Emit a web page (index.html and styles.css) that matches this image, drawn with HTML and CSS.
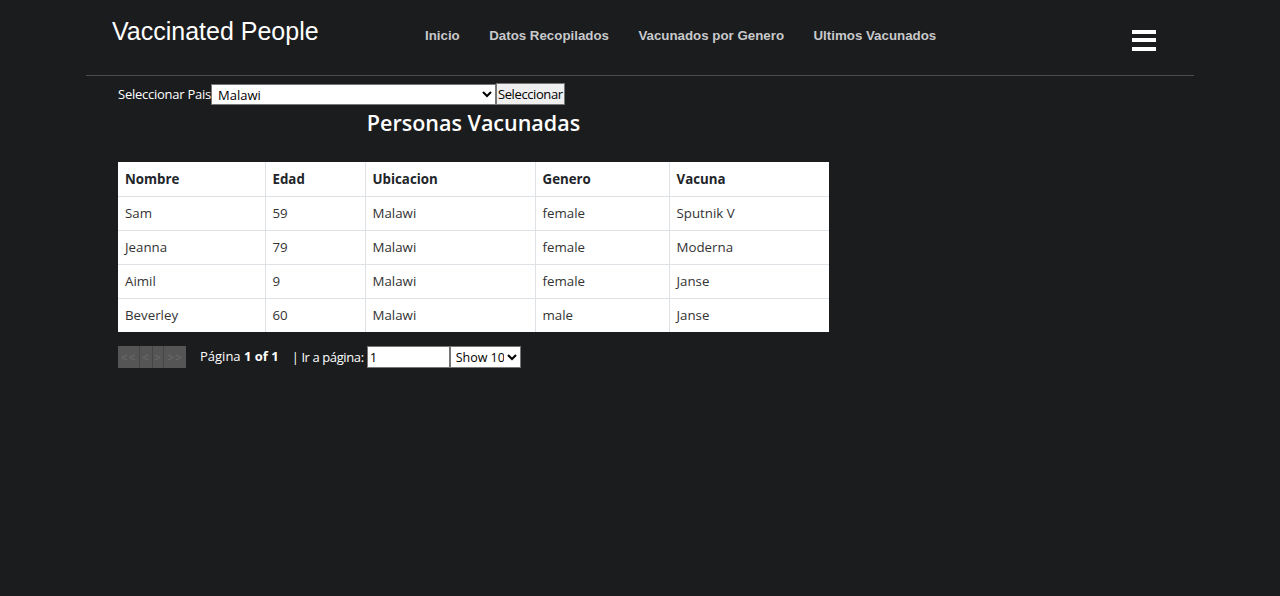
FILE: index.html
```html
<!DOCTYPE html>
<html lang="es">
<head>
<meta charset="utf-8">
<title>Vaccinated People</title>
<link rel="stylesheet" href="styles.css">
</head>
<body>
<header class="topbar">
  <div class="brand">Vaccinated People</div>
  <nav class="nav">
    <a href="#">Inicio</a>
    <a href="#">Datos Recopilados</a>
    <a href="#">Vacunados por Genero</a>
    <a href="#">Ultimos Vacunados</a>
  </nav>
  <button class="burger" aria-label="menu"><span></span><span></span><span></span></button>
</header>
<main class="main">
  <form class="picker">
    <label for="pais">Seleccionar Pais</label>
    <select id="pais" class="country"><option>Malawi</option></select>
    <button type="button" class="go">Seleccionar</button>
  </form>
  <section class="block">
    <h2 class="title">Personas Vacunadas</h2>
    <table class="grid">
      <thead>
        <tr><th class="c1">Nombre</th><th class="c2">Edad</th><th class="c3">Ubicacion</th><th class="c4">Genero</th><th class="c5">Vacuna</th></tr>
      </thead>
      <tbody>
        <tr><td>Sam</td><td>59</td><td>Malawi</td><td>female</td><td>Sputnik V</td></tr>
        <tr><td>Jeanna</td><td>79</td><td>Malawi</td><td>female</td><td>Moderna</td></tr>
        <tr><td>Aimil</td><td>9</td><td>Malawi</td><td>female</td><td>Janse</td></tr>
        <tr><td>Beverley</td><td>60</td><td>Malawi</td><td>male</td><td>Janse</td></tr>
      </tbody>
    </table>
    <div class="pager">
      <div class="pbtns">
        <button type="button" class="b-first" disabled>&lt;&lt;</button><button type="button" class="b-prev" disabled>&lt;</button><button type="button" class="b-next" disabled>&gt;</button><button type="button" class="b-last" disabled>&gt;&gt;</button>
      </div>
      <span class="pinfo">Página <strong>1 of 1</strong></span>
      <span class="goto">| Ir a página:</span>
      <input class="pnum" type="number" value="1">
      <select class="psize"><option>Show 10</option></select>
    </div>
  </section>
</main>
</body>
</html>
```
FILE: styles.css
```css
html, body {
  margin: 0;
  padding: 0;
  background: #1b1c1e;
  color: #fff;
  font-family: "Open Sans", "Noto Sans", sans-serif;
}
.topbar {
  margin: 0 86px;
  border-bottom: 1px solid #4a4c50;
  display: flex;
  align-items: flex-start;
  box-sizing: border-box;
  height: 76px;
}
.brand {
  font-family: "Liberation Sans", Arial, sans-serif;
  font-size: 25px;
  color: #fff;
  margin: 17px 0 0 26px;
  line-height: 29px;
  width: 313px;
}
.nav {
  display: flex;
  gap: 29.5px;
  margin: 27px 0 0 0;
}
.nav a {
  font-family: "Liberation Sans", Arial, sans-serif;
  font-weight: bold;
  font-size: 13.3px;
  color: #c8c9cb;
  text-decoration: none;
  line-height: 18px;
}
.burger {
  margin: 30px 38px 0 auto;
  width: 24px;
  padding: 0;
  border: 0;
  background: none;
  display: flex;
  flex-direction: column;
  gap: 4.3px;
}
.burger span {
  display: block;
  width: 24px;
  height: 4px;
  background: #fff;
}
.main {
  padding: 7px 0 0 118px;
}
.picker {
  display: flex;
  align-items: center;
  height: 22px;
  font-size: 13px;
}
.picker label {
  font-family: "Open Sans", sans-serif;
  font-size: 13px;
  color: #fff;
  letter-spacing: -0.25px;
}
.country {
  width: 285px;
  height: 21px;
  font-family: "Open Sans", sans-serif;
  font-size: 13px;
  border: 1px solid #767676;
  background: #fff;
  color: #000;
  padding: 0 2px;
  margin: 0;
  border-radius: 0;
}
.go {
  height: 22px;
  width: 69px;
  font-family: "Open Sans", sans-serif;
  font-size: 13px;
  letter-spacing: -0.4px;
  background: #efefef;
  border: 1px solid #767676;
  color: #000;
  padding: 0 1px;
  margin: 0;
  overflow: hidden;
  white-space: nowrap;
  text-align: left;
}
.block {
  width: 711px;
}
.title {
  margin: 3px 0 24px;
  text-align: center;
  font-size: 21.5px;
  font-weight: 600;
  line-height: 30px;
  color: #fff;
}
.grid {
  width: 711px;
  border-collapse: collapse;
  background: #fff;
  color: #212529;
  font-size: 13.3px;
}
.grid th, .grid td {
  border: 1px solid #dee2e6;
  height: 34px;
  padding: 0 7px;
  text-align: left;
  box-sizing: border-box;
}
.grid th { font-weight: bold; }
.grid td { color: #333; }
.grid tr:first-child th { border-top: 0; }
.grid tr th:first-child, .grid tr td:first-child { border-left: 0; }
.grid tr th:last-child, .grid tr td:last-child { border-right: 0; }
.grid tbody tr:last-child td { border-bottom: 0; }
.c1 { width: 147px; }
.c2 { width: 100px; }
.c3 { width: 170px; }
.c4 { width: 134px; }
.pager {
  display: flex;
  align-items: center;
  margin-top: 14px;
  font-size: 13px;
  height: 22px;
}
.pbtns {
  display: flex;
  height: 22px;
  background: #444;
}
.pbtns button {
  flex: none;
  padding: 0;
  margin: 0;
  border: 0;
  border-left: 1px solid #464646;
  background: #555;
  color: #6c6c6c;
  font-size: 12px;
  letter-spacing: 1px;
  font-family: "Open Sans", sans-serif;
  text-align: center;
}
.pbtns .b-first { width: 21px; border-left: 0; }
.pbtns .b-prev { width: 13px; }
.pbtns .b-next { width: 11px; }
.pbtns .b-last { width: 23px; }
.pinfo { margin-left: 14px; margin-top: -3px; }
.goto { margin-left: 13px; letter-spacing: -0.4px; }
.pnum {
  width: 83px;
  height: 22px;
  box-sizing: border-box;
  margin: 0 0 0 3px;
  border: 1px solid #767676;
  font-family: "Open Sans", sans-serif;
  font-size: 13px;
  padding: 0 2px;
  -moz-appearance: textfield;
}
.pnum::-webkit-inner-spin-button { -webkit-appearance: none; }
.psize {
  width: 71px;
  height: 22px;
  margin: 0;
  padding: 0 0 0 1px;
  border: 1px solid #767676;
  background: #fff;
  font-family: "Open Sans", sans-serif;
  font-size: 12.5px;
  border-radius: 0;
}
```
